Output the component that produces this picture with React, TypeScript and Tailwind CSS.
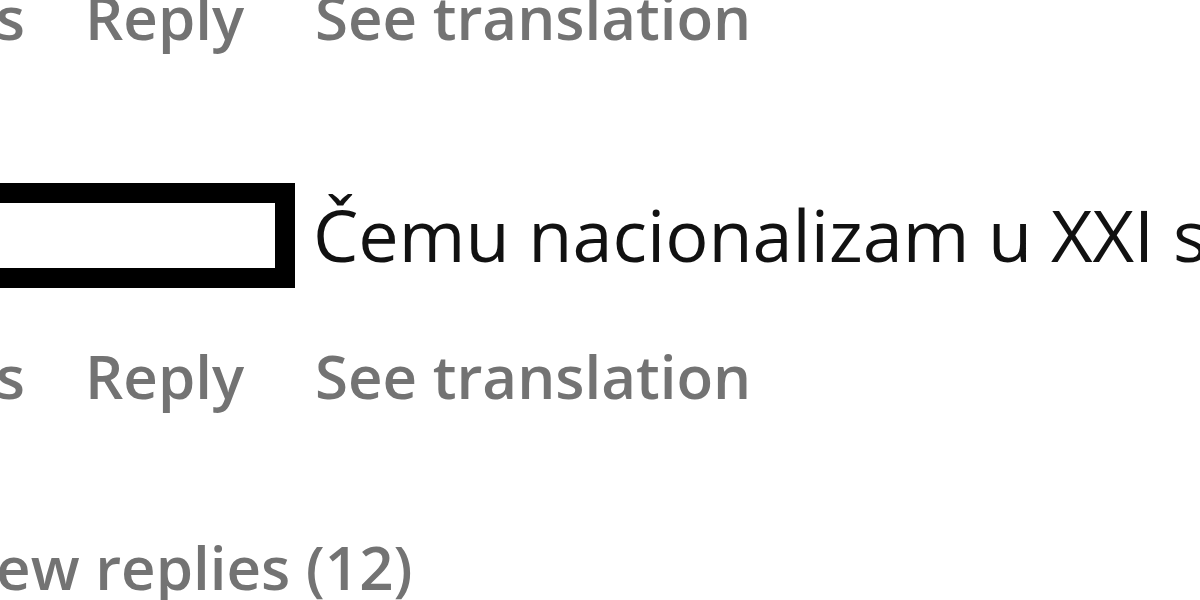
import React from 'react';

const gray = 'text-[#737373]';

function ActionRow() {
  return (
    <div className={`flex h-[60px] text-[60px] leading-[60px] font-semibold ${gray} whitespace-nowrap`}>
      <div className="w-[85px] flex justify-end">
        <span className="mr-[60px]">2 likes</span>
      </div>
      <span className="w-[230px]">Reply</span>
      <span>See translation</span>
    </div>
  );
}

export default function App() {
  return (
    <div
      className="w-[1200px] h-[600px] overflow-hidden bg-white"
      style={{ fontFamily: '"Open Sans", "Noto Sans", sans-serif' }}
    >
      <div className="-mt-[13px] flex flex-col">
        <ActionRow />

        <div className="mt-[136px] flex items-start whitespace-nowrap">
          <div className="-ml-[30px] w-[325px] h-[105px] border-[20px] border-black shrink-0" />
          <span className="ml-[18px] mt-[15px] text-[72px] leading-[72px] text-[#111]">
            Čemu nacionalizam u XXI stoljeću?
          </span>
        </div>

        <div className="mt-[58px]">
          <ActionRow />
        </div>

        <div className={`mt-[131px] -ml-[58px] h-[60px] text-[60px] leading-[60px] font-semibold ${gray} whitespace-nowrap`}>
          View replies (12)
        </div>
      </div>
    </div>
  );
}
